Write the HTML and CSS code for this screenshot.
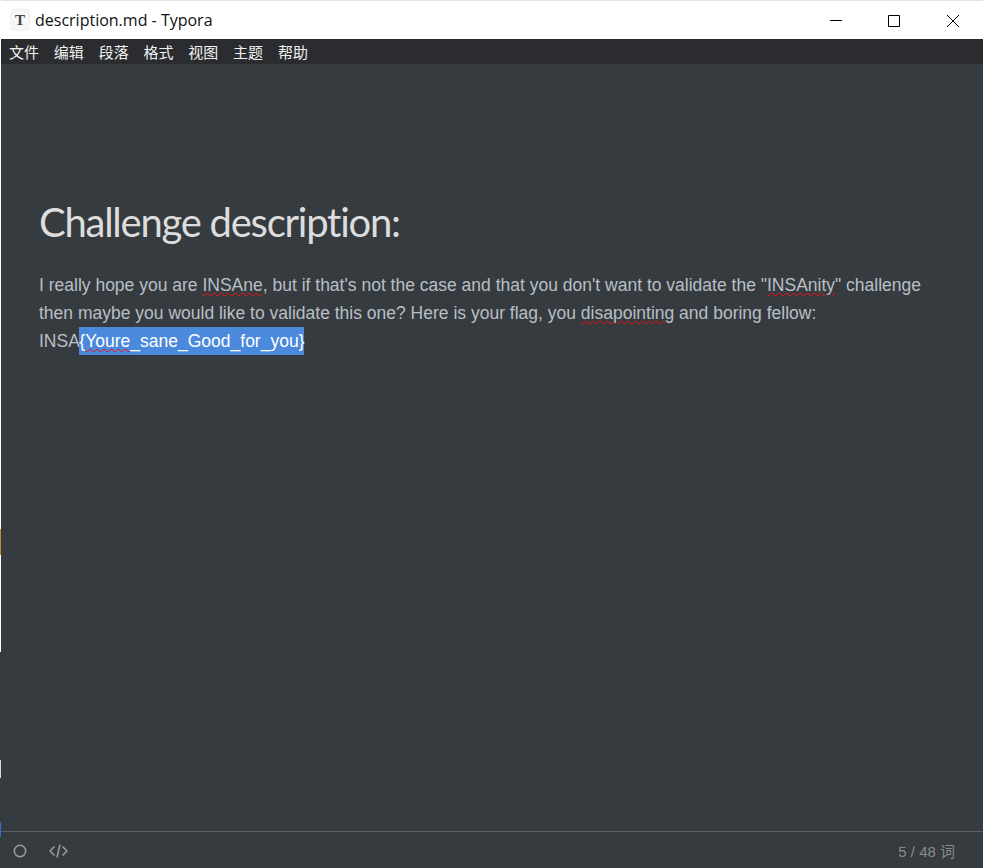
FILE: index.html
```html
<!DOCTYPE html>
<html>
<head>
    <meta charset="UTF-8">
    <title>description.md - Typora</title>
    <link rel="stylesheet" href="styles.css">
</head>
<body>
    <div class="edge">
        <div class="edgeTop"></div>
        <div class="edgeOrange"></div>
        <div class="edgeWhite"></div>
        <div class="edgeDark"></div>
        <div class="edgeLight"></div>
        <div class="edgeDark2"></div>
        <div class="edgeBlue"></div>
    </div>
    <div class="window">
        <div class="titlebar">
            <div class="appIcon">T</div>
            <div class="title">description.md - Typora</div>
            <div class="winButtons">
                <svg width="58" height="38" viewBox="0 0 58 38"><path d="M21 19.500H33" stroke="#000" fill="none"/></svg>
                <svg width="58" height="38" viewBox="0 0 58 38"><path d="M21.500 14.500H32.500V25.500H21.500Z" stroke="#000" fill="none"/></svg>
                <svg width="58" height="38" viewBox="0 0 58 38"><path d="M22 14L34 26M34 14L22 26" stroke="#000" fill="none"/></svg>
            </div>
        </div>
        <div class="menubar">
            <span>文件</span>
            <span>编辑</span>
            <span>段落</span>
            <span>格式</span>
            <span>视图</span>
            <span>主题</span>
            <span>帮助</span>
        </div>
        <div class="content">
            <h1>Challenge description:</h1>
            <p>I really hope you are <span class="typo">INSAne</span>, but if that's not the case and that you don't want to validate the "<span class="typo">INSAnity</span>" challenge then maybe you would like to validate this one? Here is your flag, you <span class="typo">disapointing</span> and boring fellow: <span class="flag">INSA<span class="selected">{<span class="typo">Youre</span>_sane_Good_for_you}</span></span></p>
        </div>
        <div class="footer">
            <div class="footerIcons">
                <svg width="14" height="14" viewBox="0 0 14 14"><circle cx="7" cy="7" r="5.700" stroke="#9a9fa3" stroke-width="1.500" fill="none"/></svg>
                <svg width="19" height="16" viewBox="0 0 19 16"><path d="M5.500 3.500L1 8L5.500 12.500M13.500 3.500L18 8L13.500 12.500M11 1.500L8 14.500" stroke="#9a9fa3" stroke-width="1.500" fill="none"/></svg>
            </div>
            <div class="wordCount">5 / 48 词</div>
        </div>
    </div>
</body>
</html>
```

FILE: styles.css
```css
body {
    margin: 0;
    padding: 0;
    display: flex;
    background-color: #363b3f;
}

.edge {
    width: 1px;
    height: 868px;
    flex-shrink: 0;
    display: flex;
    flex-direction: column;
}

.edgeTop {
    height: 529px;
    background-color: #fff;
}

.edgeOrange {
    height: 26px;
    background-color: #c98a2e;
}

.edgeWhite {
    height: 97px;
    background-color: #fff;
}

.edgeDark {
    height: 108px;
    background-color: #363b3f;
}

.edgeLight {
    height: 18px;
    background-color: #d8d8d8;
}

.edgeDark2 {
    height: 44px;
    background-color: #363b3f;
}

.edgeBlue {
    height: 15px;
    background-color: #2f6fd0;
}

.window {
    width: 982px;
    height: 868px;
    display: flex;
    flex-direction: column;
    font-family: "Liberation Sans", "Noto Sans CJK SC", sans-serif;
    background-color: #363b3f;
    overflow: hidden;
}

.titlebar {
    height: 38px;
    flex-shrink: 0;
    display: flex;
    align-items: center;
    background-color: #fff;
    border-top: 1px solid #e3e3e3;
    color: #111;
}

.appIcon {
    width: 18px;
    height: 20px;
    margin-left: 10px;
    display: flex;
    justify-content: center;
    align-items: center;
    background-color: #f6f6f4;
    box-shadow: 0 0 2px #c4c4c4;
    border-radius: 4px;
    font-family: "Liberation Serif", serif;
    font-size: 15px;
    font-weight: 700;
    color: #444;
}

.title {
    margin-left: 6px;
    font-family: "Open Sans", sans-serif;
    font-size: 16px;
}

.winButtons {
    margin-left: auto;
    display: flex;
}

.menubar {
    height: 25px;
    flex-shrink: 0;
    display: flex;
    align-items: center;
    column-gap: 14.800px;
    padding-left: 8px;
    background-color: #2a2c2f;
    color: #f1f1f1;
    font-size: 15px;
}

.content {
    flex: 1;
    padding: 133px 38px 0 38px;
}

h1 {
    margin: 0;
    color: #dddddd;
    font-family: "Lato", sans-serif;
    font-size: 40px;
    font-weight: 400;
    letter-spacing: -1.250px;
    line-height: 50px;
}

p {
    margin: 24px 0 0;
    color: #b8bfc6;
    font-size: 17.500px;
    line-height: 28px;
}

.typo {
    text-decoration: underline wavy #f01010 1.300px;
}

.flag {
    white-space: nowrap;
}

.selected {
    display: inline-block;
    margin-left: -0.500px;
    background-color: #4a89dc;
    color: #fff;
}

.footer {
    height: 37px;
    flex-shrink: 0;
    display: flex;
    justify-content: space-between;
    align-items: center;
    padding: 0 28px 0 12px;
    box-sizing: border-box;
    border-top: 1px solid #5c6064;
}

.footerIcons {
    display: flex;
    align-items: center;
    column-gap: 22px;
    padding-top: 2px;
}

.wordCount {
    color: #878c90;
    font-size: 15px;
}
```
